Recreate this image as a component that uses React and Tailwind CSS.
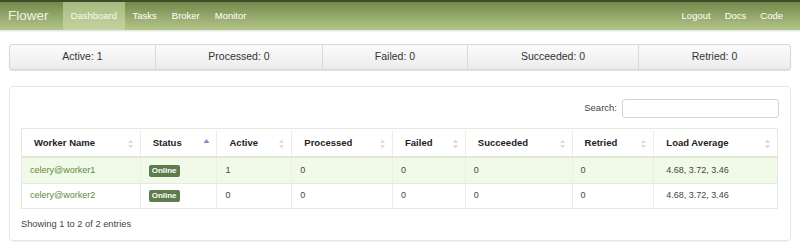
import { useState } from "react";

const stats = [
  { label: "Active: 1", w: "w-[146px]" },
  { label: "Processed: 0", w: "w-[167px]" },
  { label: "Failed: 0", w: "w-[145px]" },
  { label: "Succeeded: 0", w: "w-[171px]" },
  { label: "Retried: 0", w: "flex-1" },
];

const columns = [
  { name: "Worker Name", w: "w-[119px]" },
  { name: "Status", w: "w-[77px]", sorted: true },
  { name: "Active", w: "w-[75px]" },
  { name: "Processed", w: "w-[101px]" },
  { name: "Failed", w: "w-[73px]" },
  { name: "Succeeded", w: "w-[107px]" },
  { name: "Retried", w: "w-[82px]" },
  { name: "Load Average", w: "w-[123px]" },
];

const workers = [
  { name: "celery@worker1", active: 1, processed: 0, failed: 0, succeeded: 0, retried: 0, load: "4.68, 3.72, 3.46" },
  { name: "celery@worker2", active: 0, processed: 0, failed: 0, succeeded: 0, retried: 0, load: "4.68, 3.72, 3.46" },
];

function SortIcon({ sorted }) {
  if (sorted) {
    return (
      <svg width="7" height="8" viewBox="0 0 7 8" className="shrink-0 -mt-[4px]">
        <path d="M3.5 1 L6.5 5 L0.5 5 Z" fill="#8e8cc6" />
      </svg>
    );
  }
  return (
    <svg width="7" height="10" viewBox="0 0 7 10" className="shrink-0">
      <path d="M3.5 0.5 L6 4 L1 4 Z" fill="#dddddd" />
      <path d="M3.5 9.5 L6 6 L1 6 Z" fill="#dddddd" />
    </svg>
  );
}

export default function App() {
  const [search, setSearch] = useState("");

  const rows = workers.filter((w) => w.name.includes(search));

  return (
    <div className="w-[800px] h-[246px] bg-white overflow-hidden font-['Liberation_Sans',Arial,sans-serif] text-[#333]">
      {/* navbar */}
      <div className="h-[30px] border-t-2 border-[#3f4c2c] bg-gradient-to-b from-[#73894a] to-[#b4c78b] flex items-stretch px-2 text-white text-[9.5px] shadow-[0_1px_2px_rgba(0,0,0,0.15)]">
        <div className="flex items-center text-[13.5px] font-light text-[#eef3e4] mr-[14px]">Flower</div>
        <div className="flex items-center px-[8px] bg-gradient-to-b from-[#a6bb7f] to-[#c4d49f] text-[#f7f9f0]">Dashboard</div>
        <div className="flex items-center px-[7.5px]">Tasks</div>
        <div className="flex items-center px-[7.5px]">Broker</div>
        <div className="flex items-center px-[7.5px]">Monitor</div>
        <div className="flex-1" />
        <div className="flex items-center px-[7px]">Logout</div>
        <div className="flex items-center px-[7px]">Docs</div>
        <div className="flex items-center pl-[7px] pr-[9px]">Code</div>
      </div>

      {/* stats */}
      <div className="mx-[9px] mt-[14px] flex h-[26px] rounded-[3px] border border-[#d6d6d6] bg-gradient-to-b from-[#fbfbfb] to-[#ececec] shadow-[0_1px_1px_rgba(0,0,0,0.12)] text-[10.5px] text-[#333]">
        {stats.map((s, i) => (
          <div
            key={s.label}
            className={`${s.w} flex items-center justify-center ${i < stats.length - 1 ? "border-r border-[#d9d9d9]" : ""}`}
          >
            {s.label}
          </div>
        ))}
      </div>

      {/* panel */}
      <div className="mx-[9px] mt-[16px] h-[155px] rounded-[4px] border border-[#e6e6e6] px-[11px] pt-[12px] shadow-[0_1px_1px_rgba(0,0,0,0.05)]">
        <div className="flex justify-end items-center gap-[5px] text-[9.5px] text-[#444]">
          <span>Search:</span>
          <input
            value={search}
            onChange={(e) => setSearch(e.target.value)}
            className="w-[157px] h-[19px] border border-[#d4d4d4] rounded-[3px] bg-white outline-none px-1 text-[9.5px]"
          />
        </div>

        <div className="mt-[10px] w-[757px] border border-[#e4ebdc] text-[9px]">
          <div className="flex h-[29px] pt-[2px] border-b-2 border-[#e0ead2] font-bold text-[9.5px] text-[#222]">
            {columns.map((c, i) => (
              <div
                key={c.name}
                className={`${c.w} flex items-center justify-between pl-[12px] pr-[6px] ${i < columns.length - 1 ? "border-r border-[#eaeee3]" : ""}`}
              >
                <span>{c.name}</span>
                <SortIcon sorted={c.sorted} />
              </div>
            ))}
          </div>
          {rows.map((w, ri) => {
            const cells = [w.active, w.processed, w.failed, w.succeeded, w.retried, w.load];
            return (
              <div
                key={w.name}
                className={`flex ${ri === 0 ? "h-[26px] bg-[#f1f9e9] border-b border-[#e4ebdc]" : "h-[24px] bg-white"} text-[#444]`}
              >
                <div className="w-[119px] flex items-center pl-[8px] border-r border-[#eaeee3] text-[#5f8a3a]">{w.name}</div>
                <div className="w-[77px] flex items-center pl-[8px] border-r border-[#eaeee3]">
                  <span className="bg-[#5e7b4c] text-white font-bold text-[8px] leading-[10px] px-[3px] py-[1px] rounded-[2px]">Online</span>
                </div>
                {cells.map((v, ci) => (
                  <div
                    key={ci}
                    className={`${columns[ci + 2].w} flex items-center ${ci === cells.length - 1 ? "pl-[12px]" : "pl-[8px] border-r border-[#eaeee3]"} text-[#444]`}
                  >
                    {v}
                  </div>
                ))}
              </div>
            );
          })}
        </div>

        <div className="mt-[9px] text-[9.3px] text-[#444]">Showing 1 to 2 of 2 entries</div>
      </div>
    </div>
  );
}
